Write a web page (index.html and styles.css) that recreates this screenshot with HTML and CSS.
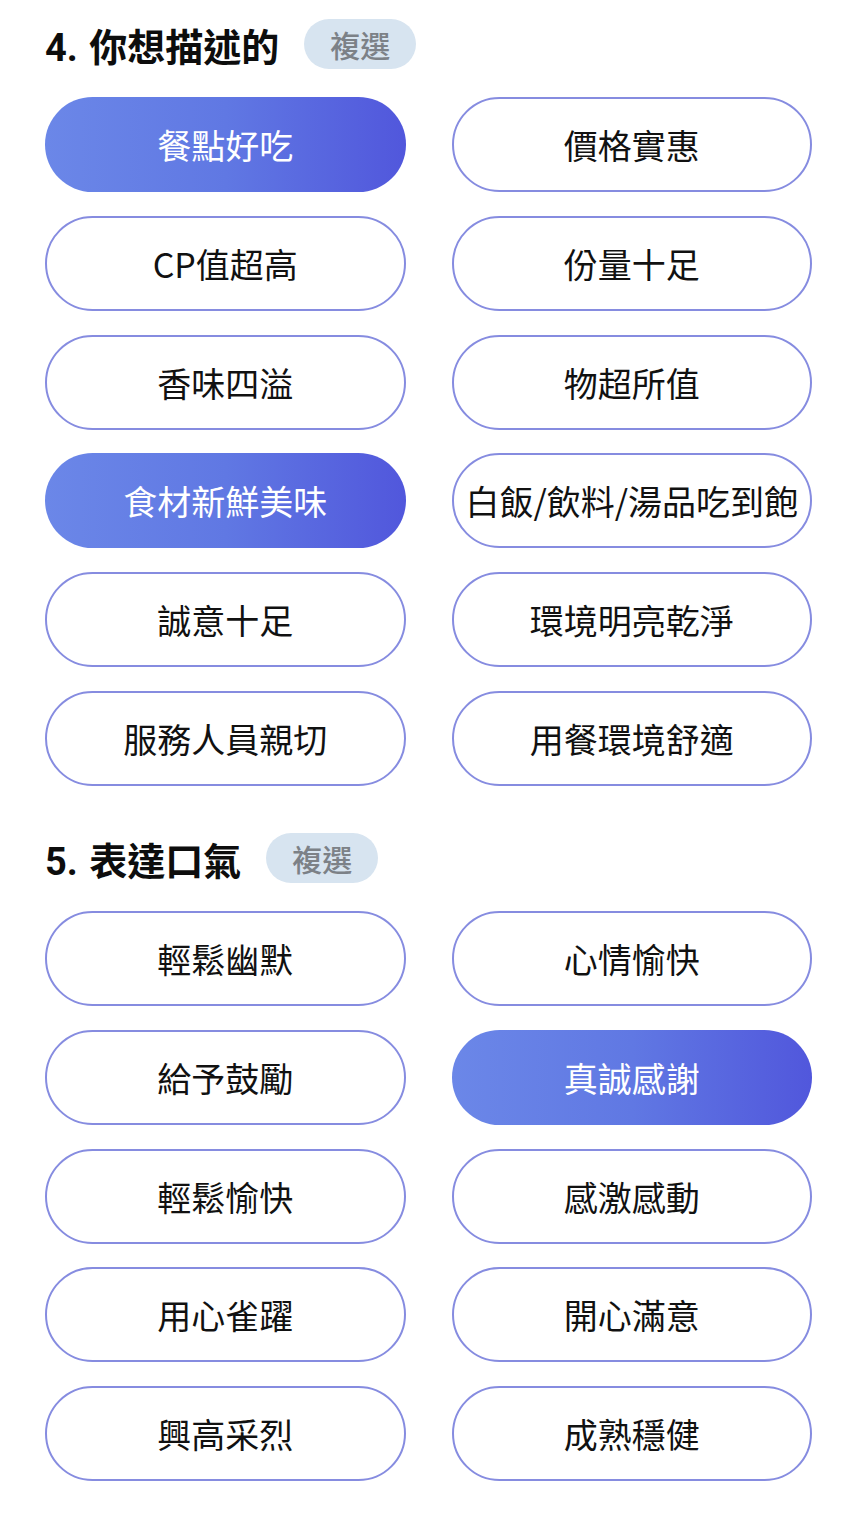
FILE: index.html
```html
<!DOCTYPE html>
<html lang="zh-Hant">
<head>
<meta charset="utf-8">
<link rel="stylesheet" href="styles.css">
</head>
<body>
<div class="page">
  <section class="group">
    <div class="group-head">
      <h2 class="title">4. 你想描述的</h2>
      <span class="badge">複選</span>
    </div>
    <div class="options">
      <button class="opt on">餐點好吃</button>
      <button class="opt">價格實惠</button>
      <button class="opt">CP值超高</button>
      <button class="opt">份量十足</button>
      <button class="opt">香味四溢</button>
      <button class="opt">物超所值</button>
      <button class="opt on">食材新鮮美味</button>
      <button class="opt">白飯/飲料/湯品吃到飽</button>
      <button class="opt">誠意十足</button>
      <button class="opt">環境明亮乾淨</button>
      <button class="opt">服務人員親切</button>
      <button class="opt">用餐環境舒適</button>
    </div>
  </section>
  <section class="group">
    <div class="group-head">
      <h2 class="title">5. 表達口氣</h2>
      <span class="badge">複選</span>
    </div>
    <div class="options">
      <button class="opt">輕鬆幽默</button>
      <button class="opt">心情愉快</button>
      <button class="opt">給予鼓勵</button>
      <button class="opt on">真誠感謝</button>
      <button class="opt">輕鬆愉快</button>
      <button class="opt">感激感動</button>
      <button class="opt">用心雀躍</button>
      <button class="opt">開心滿意</button>
      <button class="opt">興高采烈</button>
      <button class="opt">成熟穩健</button>
    </div>
  </section>
</div>
</body>
</html>
```

FILE: styles.css
```css
html, body {
  margin: 0;
  padding: 0;
  background: #ffffff;
}
body {
  font-family: "Noto Sans CJK TC", "Noto Sans", "Liberation Sans", sans-serif;
  color: #111111;
}
.page {
  padding: 19px 46px 35px 45px;
}
.group + .group {
  margin-top: 47px;
}
.group-head {
  display: flex;
  align-items: center;
  gap: 25px;
  height: 50px;
  margin-bottom: 28px;
}
.title {
  margin: 8px 0 0;
  font-family: "Roboto", "Noto Sans CJK TC", sans-serif;
  font-size: 38px;
  font-weight: 700;
  line-height: 50px;
  color: #0d0d0d;
  letter-spacing: 0;
  word-spacing: 2px;
}
.badge {
  display: inline-flex;
  align-items: center;
  justify-content: center;
  height: 50px;
  padding: 0 26px;
  border-radius: 25px;
  background: #d7e4f0;
  color: #7c8187;
  font-size: 30px;
  font-weight: 500;
  line-height: 1;
}
.options {
  display: grid;
  grid-template-columns: 1fr 1fr;
  column-gap: 46px;
  row-gap: 23.8px;
}
.opt {
  height: 95px;
  box-sizing: border-box;
  border: 2px solid #868ce0;
  border-radius: 48px;
  background: #ffffff;
  font-family: inherit;
  font-size: 34px;
  font-weight: 400;
  color: #111111;
  padding: 0 8px;
  white-space: nowrap;
  display: flex;
  align-items: center;
  justify-content: center;
  letter-spacing: 0;
}
.opt.on {
  border-color: transparent;
  background: linear-gradient(90deg, #6b87e8 0%, #6078e3 50%, #5157dc 100%);
  background-origin: border-box;
  color: #ffffff;
}
```
